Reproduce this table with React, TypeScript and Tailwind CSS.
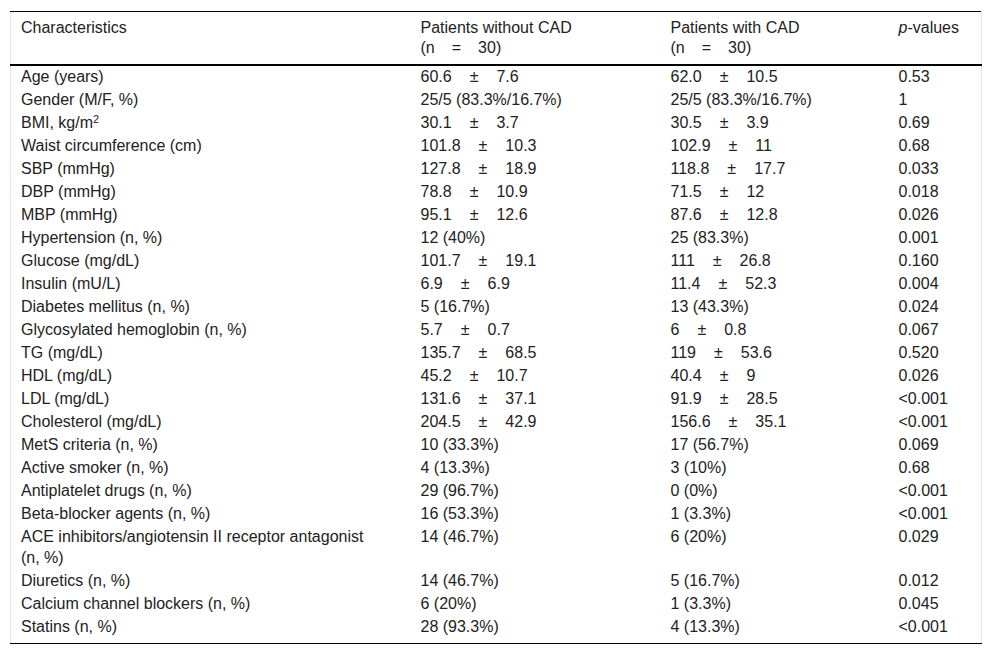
import React from 'react';

type Row = { label: React.ReactNode; a: React.ReactNode; b: React.ReactNode; p: string };

// mean ± sd, spaced the way the source table sets it
function pm(m: string, sd: string) {
  return (
    <>
      {m}
      <span className="px-[18px]">±</span>
      {sd}
    </>
  );
}

const ROWS: Row[] = [
  { label: 'Age (years)', a: pm('60.6', '7.6'), b: pm('62.0', '10.5'), p: '0.53' },
  { label: 'Gender (M/F, %)', a: '25/5 (83.3%/16.7%)', b: '25/5 (83.3%/16.7%)', p: '1' },
  {
    label: (
      <>
        BMI, kg/m<sup className="text-[11px]">2</sup>
      </>
    ),
    a: pm('30.1', '3.7'),
    b: pm('30.5', '3.9'),
    p: '0.69',
  },
  { label: 'Waist circumference (cm)', a: pm('101.8', '10.3'), b: pm('102.9', '11'), p: '0.68' },
  { label: 'SBP (mmHg)', a: pm('127.8', '18.9'), b: pm('118.8', '17.7'), p: '0.033' },
  { label: 'DBP (mmHg)', a: pm('78.8', '10.9'), b: pm('71.5', '12'), p: '0.018' },
  { label: 'MBP (mmHg)', a: pm('95.1', '12.6'), b: pm('87.6', '12.8'), p: '0.026' },
  { label: 'Hypertension (n, %)', a: '12 (40%)', b: '25 (83.3%)', p: '0.001' },
  { label: 'Glucose (mg/dL)', a: pm('101.7', '19.1'), b: pm('111', '26.8'), p: '0.160' },
  { label: 'Insulin (mU/L)', a: pm('6.9', '6.9'), b: pm('11.4', '52.3'), p: '0.004' },
  { label: 'Diabetes mellitus (n, %)', a: '5 (16.7%)', b: '13 (43.3%)', p: '0.024' },
  { label: 'Glycosylated hemoglobin (n, %)', a: pm('5.7', '0.7'), b: pm('6', '0.8'), p: '0.067' },
  { label: 'TG (mg/dL)', a: pm('135.7', '68.5'), b: pm('119', '53.6'), p: '0.520' },
  { label: 'HDL (mg/dL)', a: pm('45.2', '10.7'), b: pm('40.4', '9'), p: '0.026' },
  { label: 'LDL (mg/dL)', a: pm('131.6', '37.1'), b: pm('91.9', '28.5'), p: '<0.001' },
  { label: 'Cholesterol (mg/dL)', a: pm('204.5', '42.9'), b: pm('156.6', '35.1'), p: '<0.001' },
  { label: 'MetS criteria (n, %)', a: '10 (33.3%)', b: '17 (56.7%)', p: '0.069' },
  { label: 'Active smoker (n, %)', a: '4 (13.3%)', b: '3 (10%)', p: '0.68' },
  { label: 'Antiplatelet drugs (n, %)', a: '29 (96.7%)', b: '0 (0%)', p: '<0.001' },
  { label: 'Beta-blocker agents (n, %)', a: '16 (53.3%)', b: '1 (3.3%)', p: '<0.001' },
  {
    label: 'ACE inhibitors/angiotensin II receptor antagonist (n, %)',
    a: '14 (46.7%)',
    b: '6 (20%)',
    p: '0.029',
  },
  { label: 'Diuretics (n, %)', a: '14 (46.7%)', b: '5 (16.7%)', p: '0.012' },
  { label: 'Calcium channel blockers (n, %)', a: '6 (20%)', b: '1 (3.3%)', p: '0.045' },
  { label: 'Statins (n, %)', a: '28 (93.3%)', b: '4 (13.3%)', p: '<0.001' },
];

export default function App() {
  return (
    <div
      className="min-h-[656px] bg-white px-[10px] pt-[11px] text-[16px] leading-[21px] text-[#222]"
      style={{ fontFamily: '"Liberation Sans", Arial, sans-serif' }}
    >
      <table className="w-[972px] table-fixed border-collapse border-x border-x-[#e5e5e5] border-t border-t-black border-b border-b-black">
        <colgroup>
          <col className="w-[400px]" />
          <col className="w-[250px]" />
          <col className="w-[228px]" />
          <col />
        </colgroup>
        <thead>
          <tr className="border-b-2 border-b-black align-top leading-[20px]">
            <th className="px-[10px] pt-[6px] pb-[6px] text-left font-normal">Characteristics</th>
            <th className="px-[10px] pt-[6px] pb-[6px] text-left font-normal">
              Patients without CAD
              <br />
              (n<span className="px-[17px]">=</span>30)
            </th>
            <th className="px-[10px] pt-[6px] pb-[6px] text-left font-normal">
              Patients with CAD
              <br />
              (n<span className="px-[17px]">=</span>30)
            </th>
            <th className="px-[10px] pt-[6px] pb-[6px] text-left font-normal">
              <i>p</i>-values
            </th>
          </tr>
        </thead>
        <tbody>
          {ROWS.map((r, i) => {
            const pad = i === ROWS.length - 1 ? 'pt-0 pb-[6px]' : 'pt-0 pb-[2px]';
            return (
              <tr key={i} className="align-top">
                <td className={`pl-[10px] pr-[30px] ${pad}`}>{r.label}</td>
                <td className={`px-[10px] ${pad}`}>{r.a}</td>
                <td className={`px-[10px] ${pad}`}>{r.b}</td>
                <td className={`px-[10px] ${pad}`}>{r.p}</td>
              </tr>
            );
          })}
        </tbody>
      </table>
    </div>
  );
}
